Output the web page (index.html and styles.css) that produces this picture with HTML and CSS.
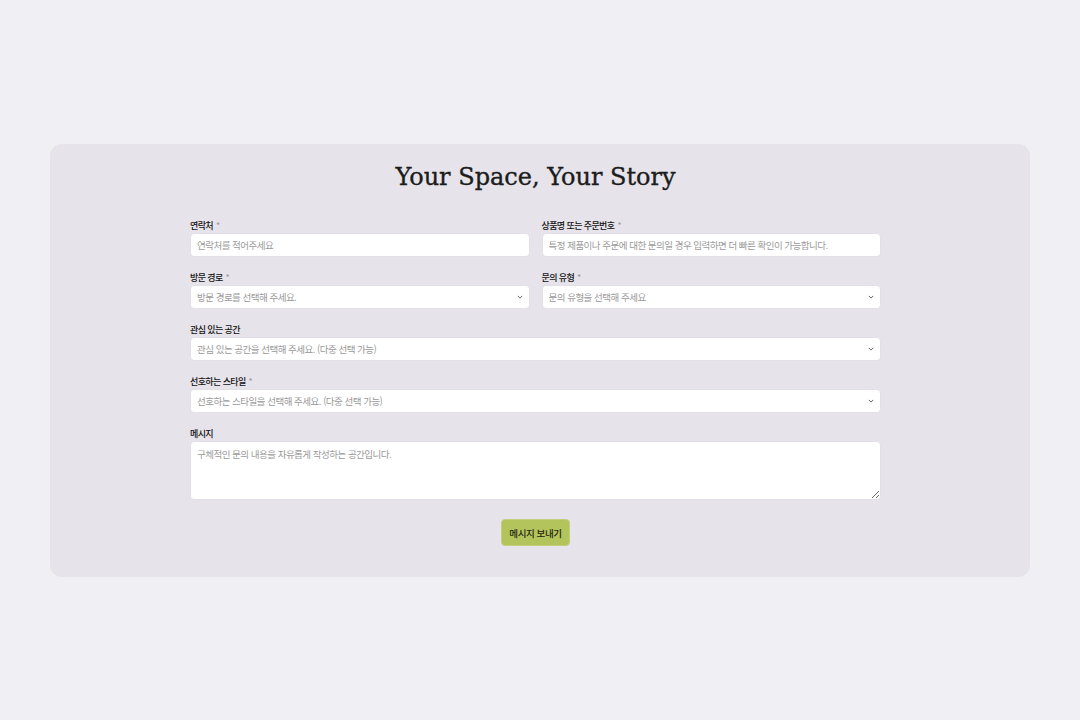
FILE: index.html
```html
<!DOCTYPE html>
<html lang="ko">
<head>
<meta charset="utf-8">
<title>Your Space, Your Story</title>
<link rel="stylesheet" href="styles.css">
</head>
<body>
<main class="card">
  <h1 class="title">Your Space, Your Story</h1>
  <form class="form">
    <div class="row two">
      <div class="field">
        <label class="label">연락처 <span class="req">*</span></label>
        <input class="control" type="text" placeholder="연락처를 적어주세요">
      </div>
      <div class="field">
        <label class="label">상품명 또는 주문번호 <span class="req">*</span></label>
        <input class="control" type="text" placeholder="특정 제품이나 주문에 대한 문의일 경우 입력하면 더 빠른 확인이 가능합니다.">
      </div>
    </div>
    <div class="row two">
      <div class="field">
        <label class="label">방문 경로 <span class="req">*</span></label>
        <div class="select-wrap">
          <select class="control select"><option>방문 경로를 선택해 주세요.</option></select>
          <svg class="chev" viewBox="0 0 8 5" width="6" height="4"><path d="M1 1l3 3 3-3" fill="none" stroke="#555" stroke-width="1.2"/></svg>
        </div>
      </div>
      <div class="field">
        <label class="label">문의 유형 <span class="req">*</span></label>
        <div class="select-wrap">
          <select class="control select"><option>문의 유형을 선택해 주세요</option></select>
          <svg class="chev" viewBox="0 0 8 5" width="6" height="4"><path d="M1 1l3 3 3-3" fill="none" stroke="#555" stroke-width="1.2"/></svg>
        </div>
      </div>
    </div>
    <div class="row">
      <div class="field">
        <label class="label">관심 있는 공간</label>
        <div class="select-wrap">
          <select class="control select"><option>관심 있는 공간을 선택해 주세요. (다중 선택 가능)</option></select>
          <svg class="chev" viewBox="0 0 8 5" width="6" height="4"><path d="M1 1l3 3 3-3" fill="none" stroke="#555" stroke-width="1.2"/></svg>
        </div>
      </div>
    </div>
    <div class="row">
      <div class="field">
        <label class="label">선호하는 스타일 <span class="req">*</span></label>
        <div class="select-wrap">
          <select class="control select"><option>선호하는 스타일을 선택해 주세요. (다중 선택 가능)</option></select>
          <svg class="chev" viewBox="0 0 8 5" width="6" height="4"><path d="M1 1l3 3 3-3" fill="none" stroke="#555" stroke-width="1.2"/></svg>
        </div>
      </div>
    </div>
    <div class="row">
      <div class="field">
        <label class="label">메시지</label>
        <textarea class="control textarea" placeholder="구체적인 문의 내용을 자유롭게 작성하는 공간입니다."></textarea>
      </div>
    </div>
    <div class="actions">
      <button class="submit" type="button">메시지 보내기</button>
    </div>
  </form>
</main>
</body>
</html>
```
FILE: styles.css
```css
* { box-sizing: border-box; }
html, body { margin: 0; padding: 0; }
body {
  background: #f0eff4;
  font-family: "Noto Sans CJK KR", "Noto Sans", sans-serif;
  color: #1a1a1a;
  padding: 144px 50px 0;
}
.card {
  background: #e6e3ea;
  border-radius: 12px;
  padding: 15px 9px 31px 0;
  display: flex;
  flex-direction: column;
  align-items: center;
}
.title {
  margin: 0 0 23px;
  font-family: "DejaVu Serif", "Liberation Serif", serif;
  font-weight: 400;
  font-size: 24px;
  line-height: 36px;
  color: #1c1c1c;
  -webkit-text-stroke: 0.35px #1c1c1c;
}
.form {
  width: 691px;
  display: flex;
  flex-direction: column;
  gap: 13px;
}
.row { display: grid; grid-template-columns: 1fr; gap: 12px; }
.row.two { grid-template-columns: 1fr 1fr; }
.field { display: flex; flex-direction: column; }
.label {
  font-size: 9px;
  letter-spacing: -0.6px;
  line-height: 15px;
  font-weight: 500;
  color: #111;
}
.req { color: #999; margin-left: 1px; font-weight: 400; }
.control {
  display: block;
  width: 100%;
  height: 24px;
  margin: 0;
  border: 1px solid #e2e0e6;
  border-radius: 4px;
  background: #fff;
  font-family: "Noto Sans CJK KR", "Noto Sans", sans-serif;
  font-size: 9.5px;
  letter-spacing: -0.5px;
  padding: 0 6px;
  color: #999;
  outline: none;
}
.control::placeholder { color: #9a9a9a; }
.select-wrap { position: relative; }
.select { appearance: none; -webkit-appearance: none; }
.chev { position: absolute; right: 7px; top: 10px; pointer-events: none; display: block; }
.textarea {
  height: 59px;
  padding: 5px 6px;
  resize: vertical;
}
.actions { display: flex; justify-content: center; margin-top: 6px; }
.submit {
  background: #b4c45c;
  border: 1px solid #c3cf7a;
  border-radius: 4px;
  height: 27px;
  width: 69px;
  padding: 0;
  font-family: "Noto Sans CJK KR", "Noto Sans", sans-serif;
  font-size: 9.5px;
  font-weight: 500;
  letter-spacing: -0.4px;
  color: #1f2410;
}
```
